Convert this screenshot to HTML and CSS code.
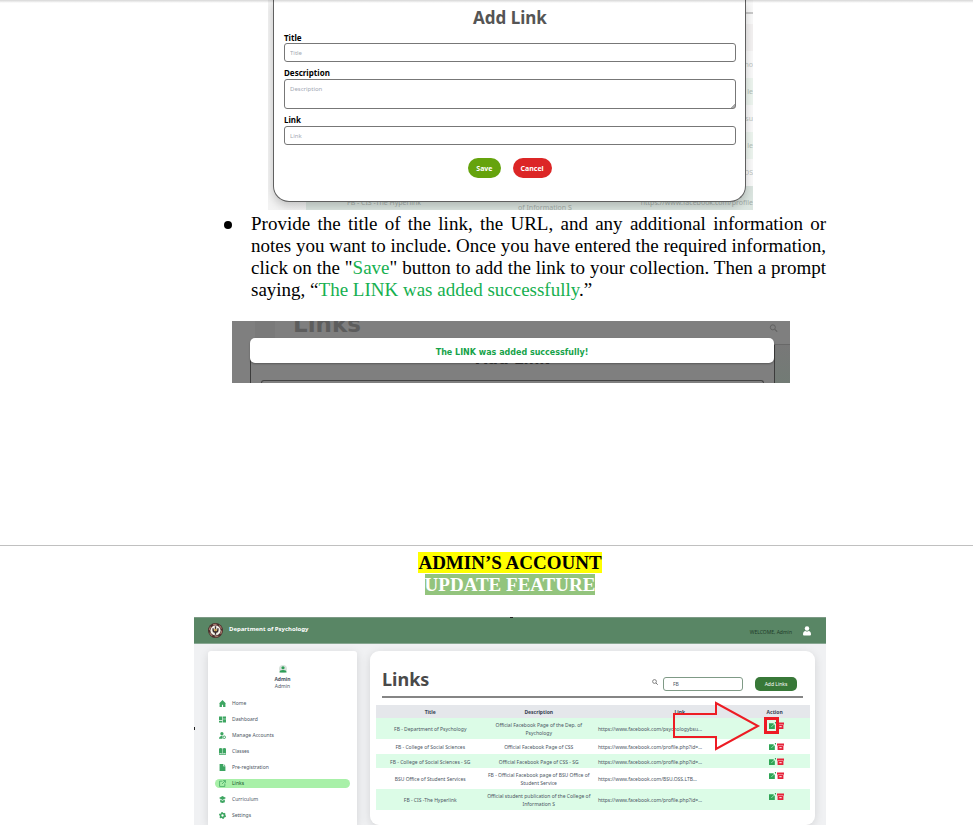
FILE: index.html
```html
<!DOCTYPE html>
<html lang="en">
<head>
<meta charset="utf-8">
<title>Admin manual - Links</title>
<link rel="stylesheet" href="styles.css">
</head>
<body>
<svg class="defs" aria-hidden="true">
  <symbol id="edit" viewBox="0 0 12 12"><path fill="#2fa555" d="M0 2h8v1l2 2v7H0z"/><path stroke="#b9ecc8" stroke-width="1.300" d="M4 8.500l5-5"/><path fill="#2fa555" d="M10 0h2v2l-1.500 1z"/></symbol>
  <symbol id="trash" viewBox="0 0 12 12"><path fill="#e5243b" d="M0 1h12v3.500H0zM1 4.500h10V12H1z"/><path fill="#fbd0d5" d="M1 4.200h10v.8H1zM4 7h4v1.800H4z"/></symbol>
  <symbol id="search" viewBox="0 0 12 12"><circle cx="5" cy="5" r="3.800" fill="none" stroke="currentColor" stroke-width="1.400"/><path d="M8 8l3.500 3.500" stroke="currentColor" stroke-width="1.600"/></symbol>
</svg>

<section class="sheet sheet-first">
  <div class="shot-form">
    <div class="backdrop" aria-hidden="true">
      <div class="back-rows">
        <span class="back-head"></span>
        <span>ho</span><span class="tint">le</span><span>su</span><span class="tint">le</span><span>OS</span>
      </div>
      <div class="back-foot"><span>FB - CIS -The Hyperlink</span><span class="low">of Information S</span><span>https://www.facebook.com/profile</span></div>
    </div>
    <form class="modal">
      <h2>Add Link</h2>
      <label for="f-title">Title</label>
      <input id="f-title" type="text" placeholder="Title">
      <label for="f-desc">Description</label>
      <textarea id="f-desc" placeholder="Description"></textarea>
      <label for="f-link">Link</label>
      <input id="f-link" type="text" placeholder="Link">
      <div class="modal-actions">
        <button type="button" class="save">Save</button>
        <button type="button" class="cancel">Cancel</button>
      </div>
    </form>
  </div>

  <ul class="steps">
    <li>Provide the title of the link, the URL, and any additional information or notes you want to include. Once you have entered the required information, click on the "<span class="green">Save</span>" button to add the link to your collection. Then a prompt saying, “<span class="green">The LINK was added successfully</span>.”</li>
  </ul>

  <div class="shot-toast">
    <div class="dim" aria-hidden="true">
      <span class="dim-square"></span>
      <span class="dim-title">Links</span>
      <svg class="dim-search"><use href="#search"/></svg>
      <span class="dim-side"></span>
      <div class="dim-modal"><span>Add Link</span><i></i></div>
    </div>
    <p class="toast" role="status">The LINK was added successfully!</p>
  </div>
</section>

<section class="sheet sheet-second">
  <h1><mark class="yellow">ADMIN’S ACCOUNT</mark><br><mark class="leaf">UPDATE FEATURE</mark></h1>

  <div class="app">
    <header>
      <svg class="logo" viewBox="0 0 28 28"><circle cx="14" cy="14" r="14" fill="#4b2f2c"/><circle cx="14" cy="14" r="11.500" fill="none" stroke="#a8776c" stroke-width="2" stroke-dasharray="7 5"/><circle cx="14" cy="14" r="9.500" fill="#f5f2ea"/><path d="M14 6v16M9.500 10v3q0 4 4.500 4t4.500-4v-3" fill="none" stroke="#3a2b2b" stroke-width="2.600"/><circle cx="14" cy="13" r="2.200" fill="#c79a3c"/></svg>
      <strong>Department of Psychology</strong>
      <span class="welcome">WELCOME, Admin</span>
      <svg class="user" viewBox="0 0 16 20"><circle cx="8" cy="5" r="4.500" fill="#fff"/><path fill="#fff" d="M0 17q0-7 5-7 3 2 6 0 5 0 5 7 0 2-2 2H2q-2 0-2-2z"/></svg>
    </header>
    <div class="app-body">
      <aside>
        <svg class="avatar" viewBox="0 0 16 16"><circle cx="8" cy="8" r="8" fill="#d9e2dc"/><circle cx="8" cy="5.500" r="3.200" fill="#2f9e58"/><path fill="#2f9e58" d="M1 14q0-4 7-4t7 4v1H1z"/></svg>
        <b>Admin</b>
        <small>Admin</small>
        <nav>
          <a href="#"><svg viewBox="0 0 12 12"><path d="M6 0l6 6h-1v6H7V8H5v4H1V6H0z"/></svg>Home</a>
          <a href="#"><svg viewBox="0 0 12 12"><path d="M0 1h5.500v6H0zM6.500 1H12v3.500H6.500zM0 8h5.500v3H0zM6.500 5.500H12V11H6.500z"/></svg>Dashboard</a>
          <a href="#"><svg viewBox="0 0 12 12"><circle cx="5" cy="3" r="2.800"/><path d="M0 11.500Q0 7 6 6.500v5z"/><circle cx="9" cy="9" r="2.200" fill="none" stroke="#3da561" stroke-width="1.600"/></svg>Manage Accounts</a>
          <a href="#"><svg viewBox="0 0 12 12"><path d="M0 1q3-2 5.600 0v9Q3 8 0 10zM12 1Q9-1 6.400 1v9Q9 8 12 10zM0 10.500h12V12H0z"/></svg>Classes</a>
          <a href="#"><svg viewBox="0 0 12 12"><path d="M1 0h6v4h4v8H1zM8 0l3 3H8z"/></svg>Pre-registration</a>
          <a href="#" class="active"><svg viewBox="0 0 12 12"><path d="M6 2H1v9h9V6M7 1h4v4M11 1L5 7" fill="none" stroke="#3da561" stroke-width="1.300"/></svg>Links</a>
          <a href="#"><svg viewBox="0 0 12 12"><path d="M6 0l6 3.500L6 7 0 3.500zM2 6l4 2 4-2v4.500L6 12l-4-1.500z"/></svg>Curriculum</a>
          <a href="#"><svg viewBox="0 0 12 12"><circle cx="6" cy="6" r="3.400" fill="none" stroke="#3da561" stroke-width="2.800"/><circle cx="6" cy="6" r="5" fill="none" stroke="#3da561" stroke-width="2" stroke-dasharray="2.600 2.600"/></svg>Settings</a>
        </nav>
      </aside>
      <main>
        <div class="bar">
          <h2>Links</h2>
          <label for="q" aria-label="Search"><svg><use href="#search"/></svg></label>
          <input id="q" type="text" value="FB">
          <button type="button">Add Links</button>
        </div>
        <table>
          <thead><tr><th>Title</th><th>Description</th><th>Link</th><th>Action</th></tr></thead>
          <tbody>
            <tr><td>FB - Department of Psychology</td><td>Official Facebook Page of the Dep. of Psychology</td><td>https://www.facebook.com/psychologybsu...</td><td><svg><use href="#edit"/></svg><svg><use href="#trash"/></svg></td></tr>
            <tr><td>FB - College of Social Sciences</td><td>Official Facebook Page of CSS</td><td>https://www.facebook.com/profile.php?id=...</td><td><svg><use href="#edit"/></svg><svg><use href="#trash"/></svg></td></tr>
            <tr><td>FB - College of Social Sciences - SG</td><td>Official Facebook Page of CSS - SG</td><td>https://www.facebook.com/profile.php?id=...</td><td><svg><use href="#edit"/></svg><svg><use href="#trash"/></svg></td></tr>
            <tr><td>BSU Office of Student Services</td><td>FB - Official Facebook page of BSU Office of Student Service</td><td>https://www.facebook.com/BSU.OSS.LTB...</td><td><svg><use href="#edit"/></svg><svg><use href="#trash"/></svg></td></tr>
            <tr><td>FB - CIS -The Hyperlink</td><td>Official student publication of the College of Information S</td><td>https://www.facebook.com/profile.php?id=...</td><td><svg><use href="#edit"/></svg><svg><use href="#trash"/></svg></td></tr>
          </tbody>
        </table>
      </main>
    </div>
    <svg class="pointer" viewBox="0 0 108 50" fill="none" stroke="#ed1c24" aria-hidden="true"><path stroke-width="2" d="M2 13h42V2l42 23-42 23V36H2z"/><path stroke-width="3" d="M93.500 17.500h12v14h-12z"/></svg>
  </div>
</section>
</body>
</html>
```
FILE: styles.css
```css
* { box-sizing: border-box; }
body { margin: 0; background: #fff; color: #000; font-family: "Noto Sans", "Open Sans", sans-serif; }
body::before { content: ""; position: absolute; z-index: 5; top: 0; left: 0; right: 0; height: 3px; background: linear-gradient(rgba(0,0,0,.16), rgba(0,0,0,0)); }
.defs { position: absolute; width: 0; height: 0; }
input, textarea, button { font: inherit; margin: 0; }
.sheet { padding: 0 147px 0 194px; }
.sheet-first { padding-bottom: 162px; border-bottom: 1px solid #c0c0c0; }

/* add-link form */
.shot-form { position: relative; margin: 0 73px 0 74px; padding: 0 7px 8px 5px; overflow: hidden; background: linear-gradient(90deg, #f3f3f3, #fafafa); }
.backdrop { position: absolute; inset: 0; color: #bcc4c0; font-size: 7px; line-height: 10px; }
.back-rows { position: absolute; top: 12px; right: 0; width: 9px; border-top: 2px solid #c9c9c9; display: flex; flex-direction: column; }
.back-rows span { display: flex; align-items: center; justify-content: flex-end; height: 27px; background: #fafafa; }
.back-rows .back-head { height: 37px; background: linear-gradient(#fafafa 10px, #f4f2f2 10px); }
.back-rows .tint { background: #edf5ef; color: #b3c0b7; }
.back-foot { position: absolute; left: 38px; right: 0; bottom: 0; height: 24px; padding: 12px 0 0 41px; display: flex; justify-content: space-between; background: #dbe5e0; color: #a4ada9; white-space: nowrap; }
.back-foot .low { margin-left: 28px; padding-top: 5px; }
.modal { position: relative; padding: 7px 9px 23px 10px; background: #fff; border: 1px solid #606060; border-top: 0; border-radius: 0 0 16px 16px; box-shadow: 0 4px 10px rgba(0,0,0,.2); display: flex; flex-direction: column; }
.modal h2 { margin: 0 0 3px; font-size: 17px; line-height: 22px; text-align: center; color: #555; }
.modal label { font-size: 8px; line-height: 11px; font-weight: 700; }
.modal input, .modal textarea { width: 100%; height: 19px; margin: 0 0 6px; padding: 0 5px; font-size: 6px; border: 1px solid #777; border-radius: 3px; background: #fff; }
.modal label + input, .modal label + textarea { margin-bottom: 5px; }
.modal label:not(:first-of-type) { line-height: 12px; }
.modal textarea { height: 30px; padding-top: 5px; resize: none; background: linear-gradient(135deg, #fff 50%, #aaa 50%) right bottom / 4px 4px no-repeat #fff; }
.modal ::placeholder { color: #a3a8b3; opacity: 1; }
.modal-actions { display: flex; justify-content: center; gap: 12px; margin-top: 8px; }
.modal button { height: 20px; padding: 0 8px; border: 0; border-radius: 10px; color: #fff; font-size: 7px; font-weight: 700; }
.save { background: #65a30d; }
.cancel { background: #dc2626; }

.steps { margin: 3px 0 0; padding: 0 0 0 57px; list-style: none; font: 19px/22px "Liberation Serif", serif; text-align: justify; }
.steps li { position: relative; }
.steps li::before { content: ""; position: absolute; left: -27px; top: 8px; width: 8px; height: 8px; border-radius: 50%; background: #000; }
.green { color: #16b050; }

/* success prompt */
.shot-toast { position: relative; margin: 20px 36px 0 38px; padding: 17px 16px 20px 18px; background: #7f7f7f; overflow: hidden; }
.toast { position: relative; margin: 0; border-radius: 5px; background: #fff; color: #16a34a; font: 700 8px/25px "DejaVu Sans", sans-serif; height: 25px; padding-top: 2px; text-align: center; box-shadow: 0 1px 2px rgba(0,0,0,.3); }
.toast, .dim-modal span { white-space: nowrap; }
.dim { position: absolute; inset: 0; font: 700 15px/20px "DejaVu Sans", sans-serif; color: #333; }
.dim-square { position: absolute; left: 23px; top: 0; width: 20px; height: 17px; background: #7a7a7a; }
.dim-title { position: absolute; left: 61px; top: -9px; font-size: 23px; line-height: 24px; color: #5d5d5d; }
.dim-search { position: absolute; right: 12px; top: 3px; width: 9px; height: 8px; color: #606060; }
.dim-side { position: absolute; right: 0; top: 23px; bottom: 0; width: 16px; border-top: 1px solid #686868; background: linear-gradient(#787878, #727b75); }
.dim-modal { position: absolute; left: 18px; right: 15px; top: 24px; bottom: 0; padding: 4px 10px 0; border: 1px solid #3c3c3c; border-width: 0 1px; text-align: center; }
.dim-modal span { display: block; margin-bottom: 11px; line-height: 20px; }
.dim-modal i { display: block; height: 6px; border: 1px solid #444; border-bottom: 0; border-radius: 3px 3px 0 0; }

/* second sheet */
.sheet-second { padding-top: 6px; }
h1 { margin: 0 0 21px; font: 700 19px/22px "Liberation Serif", serif; text-align: center; }
.yellow { background: #ff0; color: #000; }
.leaf { background: #93c47d; color: #fff; }

.app { position: relative; background: #f0f1f3; font-size: 5px; color: #4b5563; }
.app::before, .app::after { content: ""; position: absolute; background: #222; }
.app::before { left: 0; top: 110px; width: 1px; height: 3px; }
.app::after { left: 50%; top: 0; width: 3px; height: 1px; }
.app header { display: flex; align-items: center; height: 27px; padding: 0 15px 0 14px; background: #598665; border-top: 1px solid #7d9a86; border-bottom: 1px solid #88a792; }
.logo { width: 15px; height: 15px; margin-right: 6px; }
.app header strong { color: #fff; font-size: 6px; line-height: 8px; margin-bottom: 4px; }
.welcome { margin-left: auto; color: #1f3b2a; line-height: 8px; margin-top: 3px; }
.user { width: 8px; height: 10px; margin-left: 11px; }
.app-body { display: flex; align-items: stretch; gap: 13px; padding: 7px 11px 0 14px; }
aside { flex: 0 0 149px; padding: 14px 7px 5px; display: flex; flex-direction: column; align-items: center; background: #fff; border-radius: 3px 3px 0 0; box-shadow: 0 2px 10px rgba(0,0,0,.12); color: #4b5563; }
.avatar { width: 8px; height: 8px; }
aside b { margin-top: 2px; line-height: 8px; }
aside small { font-size: 5px; line-height: 7px; }
nav { align-self: stretch; display: flex; flex-direction: column; gap: 7px; margin-top: 9px; }
nav a { display: flex; align-items: center; gap: 6px; height: 9px; padding-left: 4px; border-radius: 5px; color: inherit; text-decoration: none; line-height: 9px; }
nav svg { width: 7px; height: 7px; fill: #3da561; }
nav .active { background: #a8f0a8; color: #14532d; }
main { flex: 1; min-width: 0; padding: 16px 5px 14px 6px; background: #fff; border-radius: 9px; box-shadow: 0 2px 10px rgba(0,0,0,.12); }
.bar { display: flex; align-items: center; height: 31px; margin: 0 7px 7px 6px; border-bottom: 2px solid #858585; }
.bar h2 { margin: 0 auto 6px 0; font-size: 18px; line-height: 24px; color: #4a4a4a; }
.bar label { display: flex; margin: 0 5px 0 0; color: #555; }
.bar label svg { width: 6px; height: 6px; }
.bar input { width: 80px; height: 14px; padding: 0 9px; border: 1px solid #7f9a86; border-radius: 3px; color: #4b5563; margin-top: 4px; }
.bar button { width: 42px; height: 14px; margin: 4px 6px 0 12px; padding: 0; border: 0; border-radius: 5px; background: #387838; color: #fff; }
table { width: 100%; border-collapse: collapse; table-layout: fixed; text-align: center; line-height: 8px; }
th { height: 13px; padding: 0; background: #e5e7eb; color: #374151; }
th:nth-child(1), th:nth-child(2) { width: 25%; }
th:nth-child(3) { width: 40%; }
td { height: 14px; padding: 3px 2px 2px; }
tbody tr:nth-child(2) td { height: 15px; }
tbody tr:nth-child(odd) { background: #dcfce7; }
td:nth-child(3) { text-align: left; padding-left: 5px; }
th:nth-child(4) { text-align: left; }
td:nth-child(4) { vertical-align: top; text-align: left; padding: 4px 0 0 2px; line-height: 0; }
td svg { width: 7px; height: 7px; margin-right: 1px; }
.pointer { position: absolute; right: 46px; top: 84px; width: 108px; height: 50px; }
```
